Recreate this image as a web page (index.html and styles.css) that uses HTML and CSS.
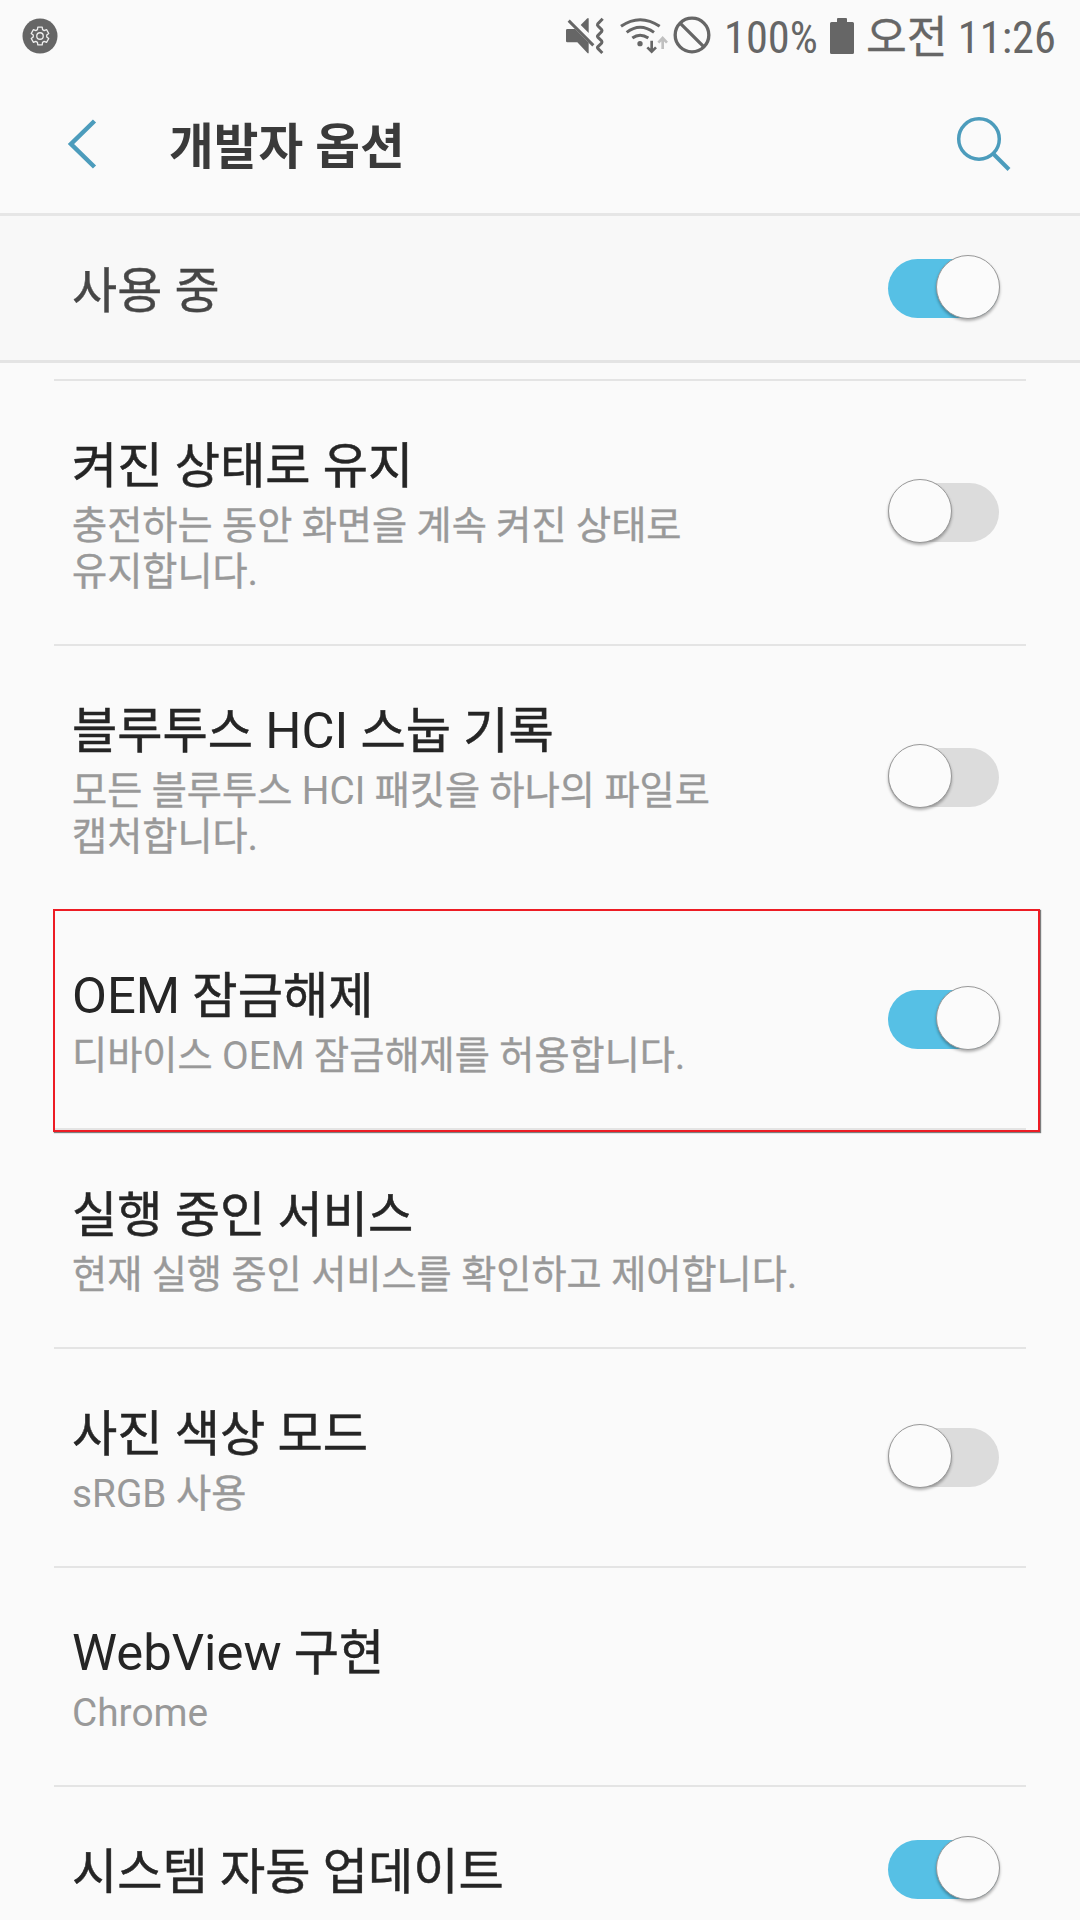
FILE: index.html
```html
<!DOCTYPE html>
<html lang="ko">
<head>
<meta charset="utf-8">
<title>개발자 옵션</title>
<link rel="stylesheet" href="styles.css">
</head>
<body>
<div class="status">
  <svg class="gear" width="36" height="36" viewBox="0 0 111 111">
    <circle cx="55.5" cy="55.5" r="54" fill="#666"/>
    <g transform="translate(55.5 55.5)" fill="none" stroke="#eee" stroke-width="4" stroke-linejoin="round">
      <path d="M-7.9-19.5L-6.8-27.2H6.8L7.9-19.5L12.9-16.6L20.2-19.5L27-7.7L20.8-2.9V2.9L27 7.7L20.2 19.5L12.9 16.6L7.9 19.5L6.8 27.2H-6.8L-7.9 19.5L-12.9 16.6L-20.2 19.5L-27 7.7L-20.8 2.9V-2.9L-27-7.7L-20.2-19.5L-12.9-16.6Z"/>
      <circle r="10"/>
    </g>
  </svg>
  <svg class="signals" width="153" height="55" viewBox="0 0 459 165">
    <g fill="#666">
      <path d="M22 57H45L86 98V130H83L52 97H22Q18 97 18 93V61Q18 57 22 57Z"/>
      <path d="M86 25V69L62 45L82 25Z"/>
      <circle cx="240" cy="101" r="8"/>
    </g>
    <g fill="none" stroke="#666" stroke-width="9">
      <path d="M26 32L100 106"/>
      <path d="M128 26L113 42Q111 45 114 48L125 59Q127 62 125 65L114 76Q111 79 114 82L125 93Q127 96 125 99L114 110Q111 113 114 116L127 129"/>
      <path d="M183 49Q240 9 299 49M200 67Q240 36 282 67M217 84Q240 67 265 84"/>
      <path stroke-width="8" d="M275 92V122M262 112L275 125L288 112"/>
      <path stroke="#c0c0c0" stroke-width="8" d="M308 117V86M295 98L308 84L321 98"/>
      <circle cx="396" cy="75" r="50.5" stroke-width="10"/>
      <path stroke-width="10" d="M361 40L431 110"/>
    </g>
  </svg>
  <span class="status-text percent">100%</span>
  <svg class="battery" width="24" height="36" viewBox="0 0 24 36"><path d="M8 0H16Q17 0 17 1V4H22.500Q24 4 24 5.500V34.500Q24 36 22.500 36H1.500Q0 36 0 34.500V5.500Q0 4 1.500 4H7V1Q7 0 8 0Z" fill="#666"/></svg>
  <span class="status-text"><span class="ko">오전</span> 11:26</span>
</div>

<header class="header">
  <svg width="32" height="56" viewBox="0 0 32 56"><path d="M28.500 5L5 28L28.500 51" fill="none" stroke="#4c9cbc" stroke-width="4.500"/></svg>
  <h1 class="heading">개발자 옵션</h1>
  <svg class="search" width="56" height="56" viewBox="0 0 56 56" fill="none" stroke="#4c9cbc"><circle cx="23" cy="23" r="20.300" stroke-width="3.500"/><path d="M37 37.500L53 53.500" stroke-width="4"/></svg>
</header>

<section class="master">
  <span class="master-label">사용 중</span>
  <span class="switch on"></span>
</section>

<main class="list">
  <div class="item">
    <div>
      <div class="title">켜진 상태로 유지</div>
      <div class="desc">충전하는 동안 화면을 계속 켜진 상태로<br>유지합니다.</div>
    </div>
    <span class="switch"></span>
  </div>
  <div class="item">
    <div>
      <div class="title">블루투스 <span class="latin">HCI</span> 스눕 기록</div>
      <div class="desc">모든 블루투스 <span class="latin">HCI</span> 패킷을 하나의 파일로<br>캡처합니다.</div>
    </div>
    <span class="switch"></span>
  </div>
  <div class="item highlighted">
    <div>
      <div class="title"><span class="latin">OEM</span> 잠금해제</div>
      <div class="desc">디바이스 <span class="latin">OEM</span> 잠금해제를 허용합니다.</div>
    </div>
    <span class="switch on"></span>
  </div>
  <div class="item">
    <div>
      <div class="title">실행 중인 서비스</div>
      <div class="desc">현재 실행 중인 서비스를 확인하고 제어합니다.</div>
    </div>
  </div>
  <div class="item">
    <div>
      <div class="title">사진 색상 모드</div>
      <div class="desc"><span class="latin">sRGB</span> 사용</div>
    </div>
    <span class="switch"></span>
  </div>
  <div class="item">
    <div>
      <div class="title"><span class="latin">WebView</span> 구현</div>
      <div class="desc"><span class="latin">Chrome</span></div>
    </div>
  </div>
  <div class="item">
    <div>
      <div class="title">시스템 자동 업데이트</div>
    </div>
    <span class="switch on"></span>
  </div>
</main>
</body>
</html>
```
FILE: styles.css
```css
*, *::after { box-sizing: border-box; }

body {
  margin: 0;
  height: 1920px;
  overflow: hidden;
  background: #fafafa;
  font-family: Roboto, "Noto Sans CJK KR", sans-serif;
}

svg { display: block; flex: none; }

.status {
  display: flex;
  align-items: center;
  height: 72px;
  padding-left: 22px;
}
.signals { margin-left: 502px; margin-top: 3px; }
.status-text {
  font-size: 44.4px;
  line-height: 52px;
  font-stretch: 75%;
  color: #666;
  white-space: nowrap;
  padding-top: 4px;
}
.status-text .ko { -webkit-text-stroke: 0.3px; }
.percent { width: 94px; margin-left: 11px; }
.battery { margin: 0 12px 0 12px; }

.header {
  display: flex;
  align-items: center;
  height: 144px;
  padding: 3px 68px 0 66px;
  border-bottom: 3px solid #e6e6e6;
}
.heading {
  margin: 0 0 0 71px;
  padding-top: 8px;
  font-size: 48.6px;
  line-height: 60px;
  font-weight: 700;
  color: #3a3a3a;
}
.search { margin-left: auto; }

.master {
  display: flex;
  align-items: center;
  justify-content: space-between;
  height: 147px;
  padding: 0 81px 0 72px;
  background: #f8f8f8;
  border-bottom: 3px solid #e4e4e4;
}
.master-label {
  padding-top: 6px;
  font-size: 49.1px;
  line-height: 60px;
  color: #464646;
  -webkit-text-stroke: 0.4px;
}

.list { margin: 16px 54px 0; }
.item {
  position: relative;
  display: flex;
  align-items: center;
  justify-content: space-between;
  padding: 55px 27px 49px 18px;
  border-top: 2px solid #e4e4e4;
}
.item:last-child { padding-bottom: 51px; }
.title {
  font-size: 49.2px;
  line-height: 60px;
  color: #252525;
  -webkit-text-stroke: 0.5px;
}
.desc {
  margin-top: 7px;
  font-size: 38.2px;
  line-height: 46px;
  color: #999;
  -webkit-text-stroke: 0.4px;
}
.latin { line-height: 1; -webkit-text-stroke: 0; }
.title .latin { font-size: 50.8px; }
.desc .latin { font-size: 38.8px; }

.highlighted::after {
  content: "";
  position: absolute;
  inset: -2px -14px -4px -1px;
  border: 2px solid #ed1c24;
  box-shadow: 1px 1px 1px rgba(0, 0, 0, 0.5);
  z-index: 1;
}

.switch {
  position: relative;
  flex: none;
  align-self: center;
  width: 111px;
  height: 59px;
  border-radius: 30px;
  background: #dcdcdc;
}
.item .switch { margin: -55px 0 -49px; }
.item:last-child .switch { margin: -57px 0 -51px; }
.switch::after {
  content: "";
  position: absolute;
  left: 0;
  top: -4px;
  width: 64px;
  height: 64px;
  border: 1px solid #999;
  border-radius: 50%;
  background: #fbfbfb;
  box-shadow: 0 2px 3px rgba(0, 0, 0, 0.3);
}
.switch.on { background: #56c0e5; }
.switch.on::after { left: 48px; }
```
